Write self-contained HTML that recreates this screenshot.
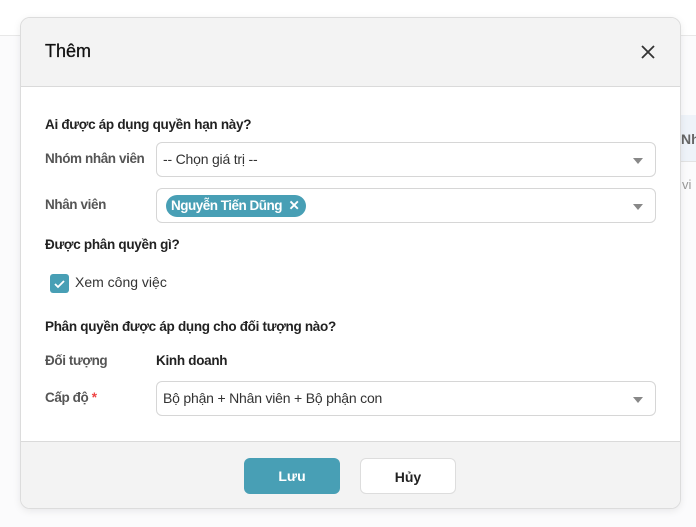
<!DOCTYPE html><html><head><meta charset="utf-8"><style>
*{box-sizing:border-box;margin:0;padding:0}
body{width:696px;height:527px;overflow:hidden;background:#fbfbfc;font-family:"Liberation Sans",sans-serif;position:relative;color:#333}
.bgline{position:absolute;left:0;right:0;top:35px;height:1px;background:#e8e8e8}
.bgtop{position:absolute;left:0;right:0;top:0;height:35px;background:#fff}
.thead{position:absolute;left:660px;right:0;top:115px;height:47px;background:#eef3f9;border-bottom:1px solid #e3e3e3}
.modal{position:absolute;left:20px;top:17px;width:661px;height:492px;border:1px solid #dcdcdc;border-radius:10px;background:#fff;overflow:hidden;box-shadow:0 2px 8px rgba(0,0,0,.08)}
.hd{height:69px;background:#f3f3f3;border-bottom:1px solid #dadada;position:relative}
.hd h1{position:absolute;left:24px;top:23px;font-size:18px;font-weight:normal;color:#111;-webkit-text-stroke:0.3px #111}
.x{position:absolute;left:619px;top:26px}
.ft{position:absolute;left:0;right:0;top:423px;bottom:0;background:#f3f3f3;border-top:1px solid #dadada}
.t{position:absolute;font-size:14px;color:#333}
.b{font-weight:bold;color:#222;font-size:13.5px;letter-spacing:-0.3px}
.lbl{color:#555;font-weight:bold;font-size:13.5px;letter-spacing:-0.4px}
.sel{position:absolute;left:135px;width:500px;height:35px;border:1px solid #d6d6d6;border-radius:6px;font-size:14px;color:#333;padding:8px 6px;letter-spacing:-0.2px}
.sel:after{content:"";position:absolute;right:12px;top:15px;border:5px solid transparent;border-top:6px solid #888;border-bottom:0}
.tag{position:absolute;left:9px;top:6px;height:22px;border-radius:11px;background:#489fb5;color:#fff;font-weight:bold;font-size:13.5px;letter-spacing:-0.5px;padding:3px 7px 0 5px}
.btn{position:absolute;top:16px;width:96px;height:36px;border-radius:6px;font-weight:bold;font-size:14px;text-align:center;line-height:36px}
</style></head><body>
<div class="bgtop"></div><div class="bgline"></div>
<div class="thead"><span style="position:absolute;left:21px;top:16px;color:#666;font-weight:bold;font-size:14px">Nh</span></div>
<span style="position:absolute;left:682px;top:177px;color:#999;font-size:13px">vi</span>
<div class="modal">
<div class="hd"><h1>Thêm</h1>
<svg class="x" width="16" height="16" viewBox="0 0 16 16"><path d="M2 2L14 14M14 2L2 14" stroke="#333" stroke-width="1.8"/></svg></div>
<div class="t b" style="left:24px;top:99px">Ai được áp dụng quyền hạn này?</div>
<div class="t lbl" style="left:24px;top:133px">Nhóm nhân viên</div>
<div class="sel" style="top:124px">-- Chọn giá trị --</div>
<div class="t lbl" style="left:24px;top:179px">Nhân viên</div>
<div class="sel" style="top:170px"><span class="tag">Nguyễn Tiến Dũng &nbsp;✕</span></div>
<div class="t b" style="left:24px;top:219px">Được phân quyền gì?</div>
<div style="position:absolute;left:29px;top:256px;width:19px;height:19px;border-radius:3px;background:#489fb5"><svg width="19" height="19"><path d="M5 10l3 3 6-6" stroke="#fff" stroke-width="1.8" fill="none"/></svg></div>
<div class="t" style="left:54px;top:256px">Xem công việc</div>
<div class="t b" style="left:24px;top:301px">Phân quyền được áp dụng cho đối tượng nào?</div>
<div class="t lbl" style="left:24px;top:335px">Đối tượng</div>
<div class="t b" style="left:135px;top:335px">Kinh doanh</div>
<div class="t lbl" style="left:24px;top:372px">Cấp độ <span style="color:#e44">*</span></div>
<div class="sel" style="top:363px">Bộ phận + Nhân viên + Bộ phận con</div>
<div class="ft">
<div class="btn" style="left:223px;background:#489fb5;color:#fff">Lưu</div>
<div class="btn" style="left:339px;background:#fff;border:1px solid #ddd;color:#222">Hủy</div>
</div>
</div>
</body></html>
